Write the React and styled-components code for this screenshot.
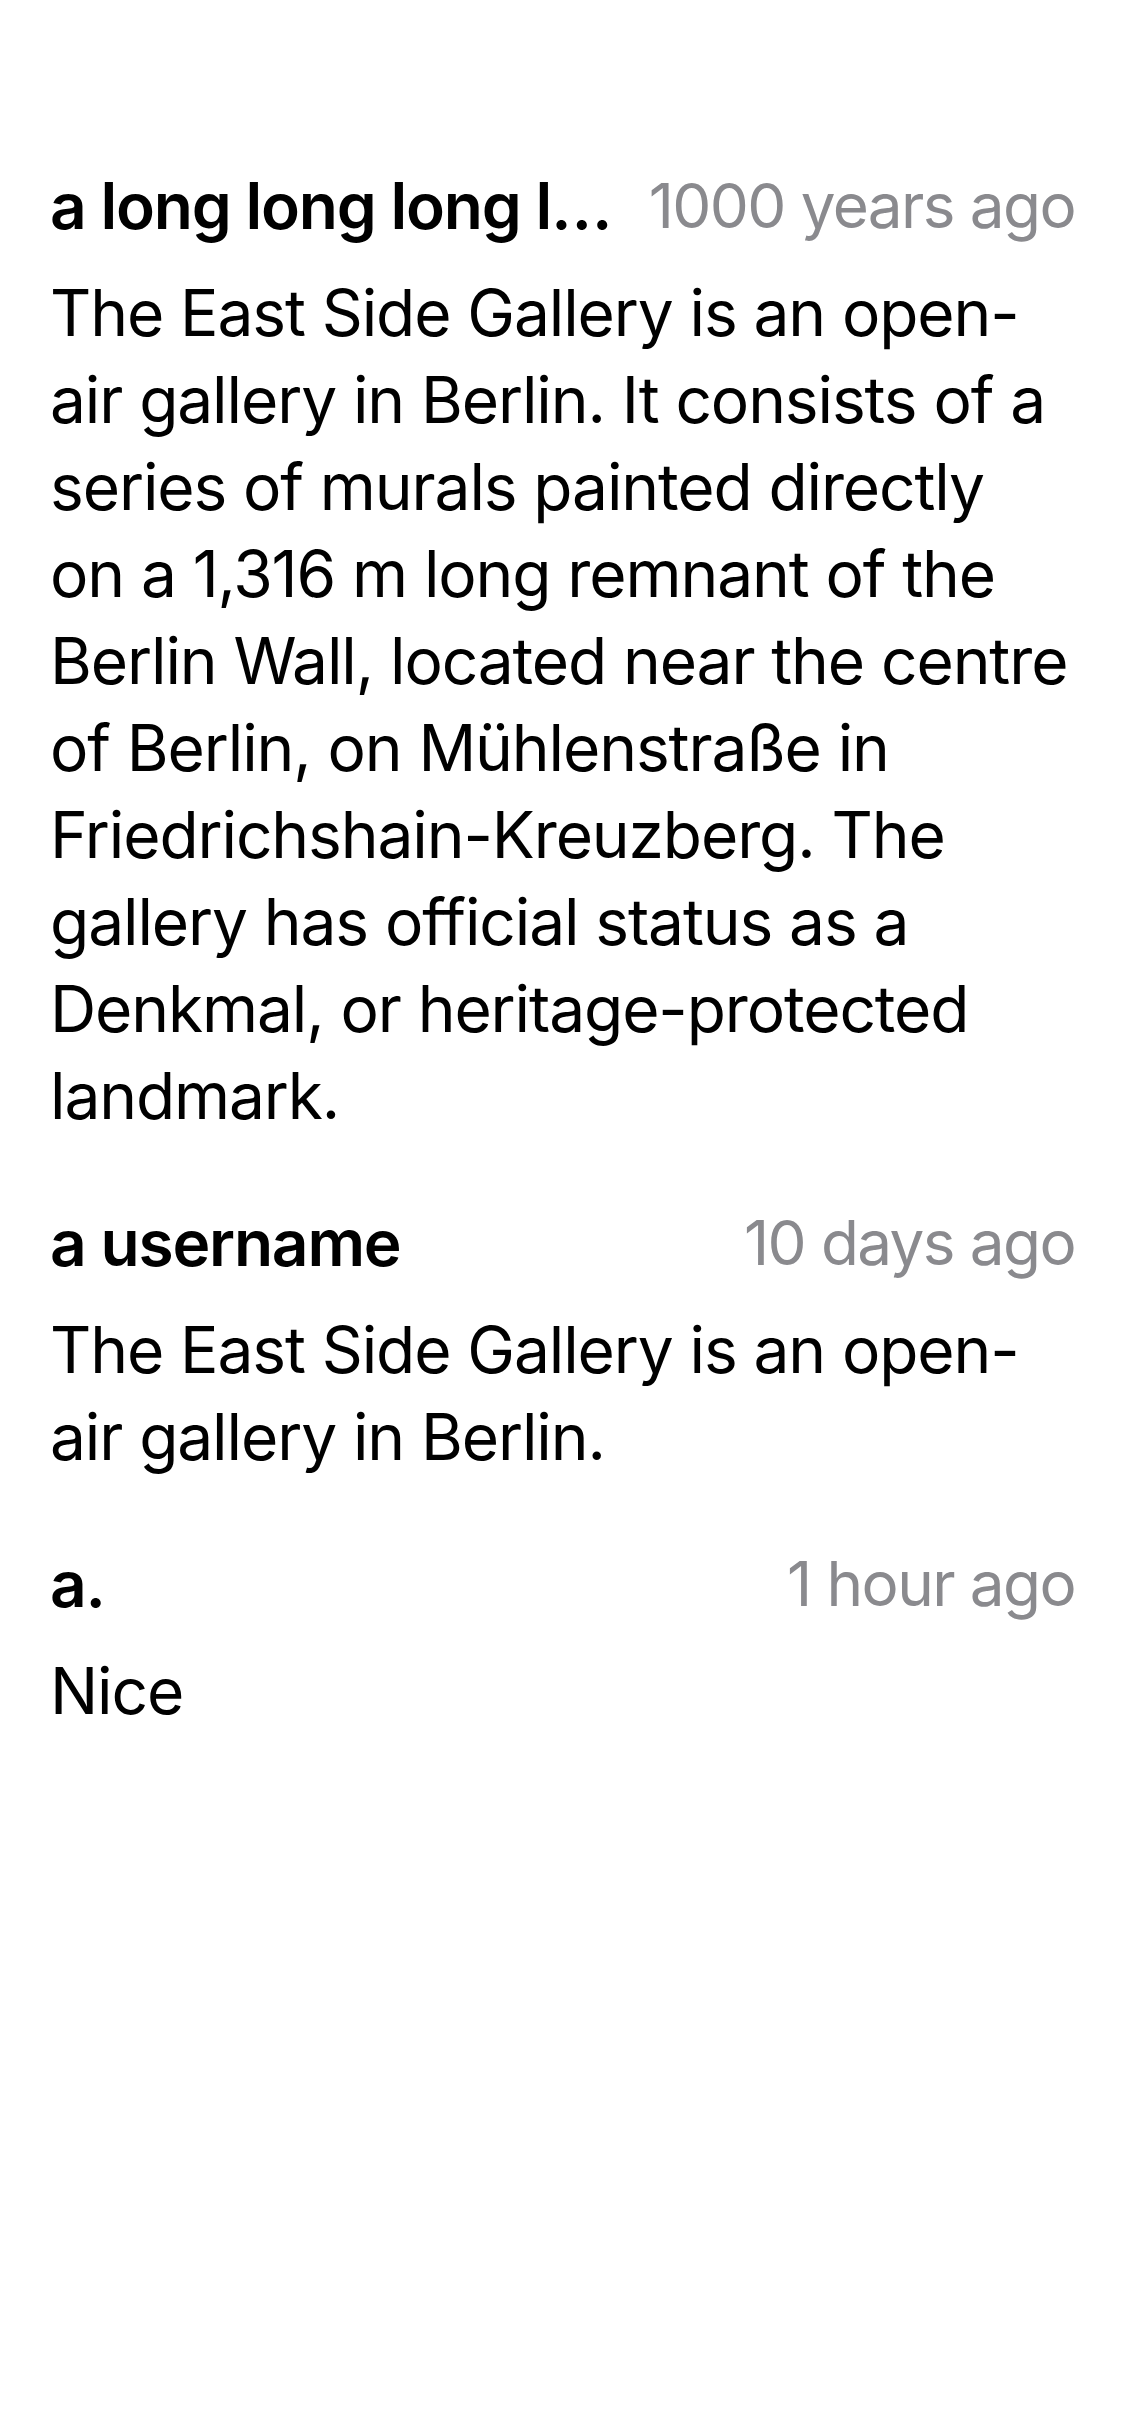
import React from "react";
import styled, { createGlobalStyle } from "styled-components";

const GlobalStyle = createGlobalStyle`
  html, body {
    margin: 0;
    padding: 0;
    background: #fff;
  }
  body {
    font-family: Inter, "Noto Sans", sans-serif;
    -webkit-font-smoothing: antialiased;
  }
`;

const Page = styled.div`
  width: 1125px;
  min-height: 2436px;
  box-sizing: border-box;
  padding: 162px 50px 0;
  background: #fff;
`;

const List = styled.div`
  display: flex;
  flex-direction: column;
  gap: 60px;
`;

const Comment = styled.div`
  display: flex;
  flex-direction: column;
  gap: 20px;
`;

const Header = styled.div`
  display: flex;
  align-items: center;
  gap: 28px;
  line-height: 87px;
`;

const Author = styled.div`
  flex: 1 1 auto;
  min-width: 0;
  font-size: 64px;
  font-weight: 600;
  letter-spacing: -1.2px;
  color: #000;
  white-space: nowrap;
  overflow: hidden;
  text-overflow: ellipsis;
`;

const Time = styled.div`
  flex: 0 0 auto;
  font-size: 62px;
  font-weight: 400;
  letter-spacing: -1.6px;
  color: #8a8a8e;
  white-space: nowrap;
`;

// pre-line keeps the break after "directly" so the wrap follows the design
const Body = styled.p`
  margin: 0;
  font-size: 64px;
  line-height: 87px;
  letter-spacing: -1.1px;
  color: #000;
  white-space: pre-line;
`;

const comments = [
  {
    author: "a long long long long long long username",
    time: "1000 years ago",
    text:
      "The East Side Gallery is an open-air gallery in Berlin. It consists of a series of murals painted directly\non a 1,316 m long remnant of the Berlin Wall, located near the centre of Berlin, on Mühlenstraße in Friedrichshain-Kreuzberg. The gallery has official status as a Denkmal, or heritage-protected landmark.",
  },
  {
    author: "a username",
    time: "10 days ago",
    text: "The East Side Gallery is an open-air gallery in Berlin.",
  },
  {
    author: "a.",
    time: "1 hour ago",
    text: "Nice",
  },
];

export default function App() {
  return (
    <>
      <GlobalStyle />
      <Page>
        <List>
          {comments.map((c, i) => (
            <Comment key={i}>
              <Header>
                <Author>{c.author}</Author>
                <Time>{c.time}</Time>
              </Header>
              <Body>{c.text}</Body>
            </Comment>
          ))}
        </List>
      </Page>
    </>
  );
}
